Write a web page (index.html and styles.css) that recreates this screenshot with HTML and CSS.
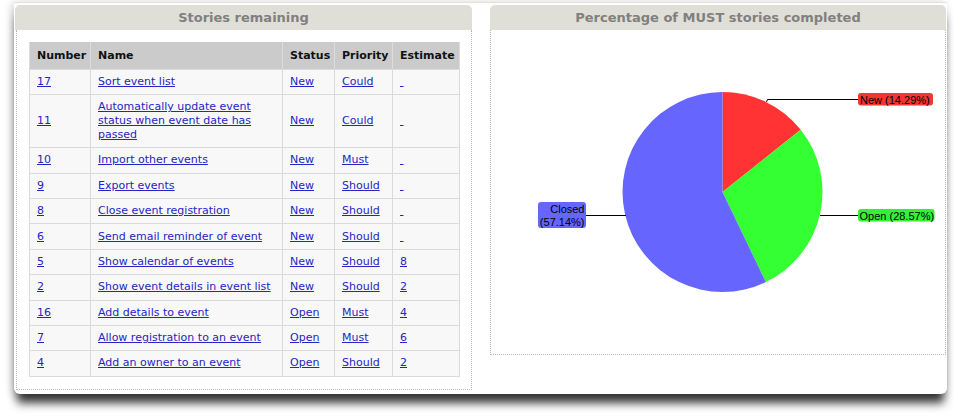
FILE: index.html
```html
<!DOCTYPE html>
<html>
<head>
<meta charset="utf-8">
<title>Stories</title>
<link rel="stylesheet" href="styles.css">
</head>
<body>
<div class="window">
  <section class="panel panel-left">
    <h2 class="panel-title">Stories remaining</h2>
    <div class="panel-body">
      <table class="stories">
        <colgroup>
          <col class="c-num"><col class="c-name"><col class="c-status"><col class="c-prio"><col class="c-est">
        </colgroup>
        <thead>
          <tr><th>Number</th><th>Name</th><th>Status</th><th>Priority</th><th>Estimate</th></tr>
        </thead>
        <tbody>
          <tr><td><a href="#">17</a></td><td><a href="#">Sort event list</a></td><td><a href="#">New</a></td><td><a href="#">Could</a></td><td><a href="#">&nbsp;</a></td></tr>
          <tr><td><a href="#">11</a></td><td><a href="#">Automatically update event status when event date has passed</a></td><td><a href="#">New</a></td><td><a href="#">Could</a></td><td><a href="#">&nbsp;</a></td></tr>
          <tr><td><a href="#">10</a></td><td><a href="#">Import other events</a></td><td><a href="#">New</a></td><td><a href="#">Must</a></td><td><a href="#">&nbsp;</a></td></tr>
          <tr><td><a href="#">9</a></td><td><a href="#">Export events</a></td><td><a href="#">New</a></td><td><a href="#">Should</a></td><td><a href="#">&nbsp;</a></td></tr>
          <tr><td><a href="#">8</a></td><td><a href="#">Close event registration</a></td><td><a href="#">New</a></td><td><a href="#">Should</a></td><td><a href="#">&nbsp;</a></td></tr>
          <tr><td><a href="#">6</a></td><td><a href="#">Send email reminder of event</a></td><td><a href="#">New</a></td><td><a href="#">Should</a></td><td><a href="#">&nbsp;</a></td></tr>
          <tr><td><a href="#">5</a></td><td><a href="#">Show calendar of events</a></td><td><a href="#">New</a></td><td><a href="#">Should</a></td><td><a href="#">8</a></td></tr>
          <tr><td><a href="#">2</a></td><td><a href="#">Show event details in event list</a></td><td><a href="#">New</a></td><td><a href="#">Should</a></td><td><a href="#">2</a></td></tr>
          <tr><td><a href="#">16</a></td><td><a href="#">Add details to event</a></td><td><a href="#">Open</a></td><td><a href="#">Must</a></td><td><a href="#">4</a></td></tr>
          <tr><td><a href="#">7</a></td><td><a href="#">Allow registration to an event</a></td><td><a href="#">Open</a></td><td><a href="#">Must</a></td><td><a href="#">6</a></td></tr>
          <tr><td><a href="#">4</a></td><td><a href="#">Add an owner to an event</a></td><td><a href="#">Open</a></td><td><a href="#">Should</a></td><td><a href="#">2</a></td></tr>
        </tbody>
      </table>
    </div>
  </section>
  <section class="panel panel-right">
    <h2 class="panel-title">Percentage of MUST stories completed</h2>
    <div class="panel-body chart-body">
      <svg class="pie" width="454" height="324" viewBox="491 30 454 324" xmlns="http://www.w3.org/2000/svg">
        <path d="M722.5,192 L722.5,92 A100,100 0 0,1 800.7,129.65 Z" fill="#ff3333"/>
        <path d="M722.5,192 L800.7,129.65 A100,100 0 0,1 765.9,282.1 Z" fill="#33ff33"/>
        <path d="M722.5,192 L765.9,282.1 A100,100 0 1,1 722.5,92 Z" fill="#6666ff"/>
        <polyline points="766.5,102 767.5,99.5 858,99.5" fill="none" stroke="#000" stroke-width="1"/>
        <line x1="820" y1="215.5" x2="858" y2="215.5" stroke="#000" stroke-width="1"/>
        <line x1="586" y1="215.5" x2="626" y2="215.5" stroke="#000" stroke-width="1"/>
        <rect x="858" y="93" width="75" height="12.5" rx="3" fill="#f03535"/>
        <text class="lbl" x="860" y="103.5">New (14.29%)</text>
        <rect x="858" y="209" width="76.5" height="12.5" rx="3" fill="#35f035"/>
        <text class="lbl" x="859.5" y="219.5">Open (28.57%)</text>
        <rect x="538" y="202" width="48" height="26" rx="3" fill="#6666ff"/>
        <text class="lbl" x="584.5" y="213" text-anchor="end">Closed</text>
        <text class="lbl" x="584.5" y="225.5" text-anchor="end">(57.14%)</text>
      </svg>
    </div>
  </section>
</div>
</body>
</html>
```
FILE: styles.css
```css
html, body {
  margin: 0;
  padding: 0;
  background: #ffffff;
}
body {
  box-sizing: border-box;
  min-height: 417px;
  padding: 2px 0 0 14px;
  font-family: "DejaVu Sans", Verdana, sans-serif;
}
.window {
  box-sizing: border-box;
  width: 933px;
  height: 392px;
  background: #ffffff;
  border-top: 1px solid #e6e0d8;
  border-radius: 2px 2px 6px 6px;
  box-shadow: 0 12px 10px -3px rgba(0, 0, 0, 0.78), -2px 1px 8px rgba(0, 0, 0, 0.2);
  padding: 2px 1px 0 1px;
  display: flex;
  align-items: flex-start;
  gap: 18px;
}
.panel-left { width: 457px; }
.panel-right { width: 456px; }
.panel-title {
  margin: 0;
  height: 25px;
  line-height: 25px;
  background: #e0dfd7;
  border-radius: 5px 5px 0 0;
  text-align: center;
  font-size: 13px;
  font-weight: bold;
  color: #808080;
}
.panel-body {
  border: 1px dotted #b8b8b8;
  border-top: none;
  margin-left: 1px;
}
.panel-left .panel-body {
  padding: 12px 12px 12px 12px;
}
.chart-body {
  height: 324px;
  margin-left: 0;
}
.pie { display: block; }
.lbl {
  font-family: "Liberation Sans", Arial, sans-serif;
  font-size: 11px;
  fill: #000;
}
.stories {
  width: 430px;
  border-collapse: collapse;
  table-layout: fixed;
  font-size: 11px;
  line-height: 14px;
}
.c-num { width: 61px; }
.c-name { width: 192px; }
.c-status { width: 52px; }
.c-prio { width: 58px; }
.c-est { width: 67px; }
.stories th {
  background: #cbcbcb;
  color: #111;
  text-align: left;
  font-weight: bold;
  padding: 6.5px 6px 6px 7px;
  border: 1px solid #dcdcdc;
  border-top: none;
}
.stories td {
  background: #f8f8f8;
  padding: 5.2px 6px 5.2px 7px;
  border: 1px solid #dadada;
  vertical-align: middle;
}
.stories a {
  color: #2525c4;
  text-decoration: underline;
}
```
